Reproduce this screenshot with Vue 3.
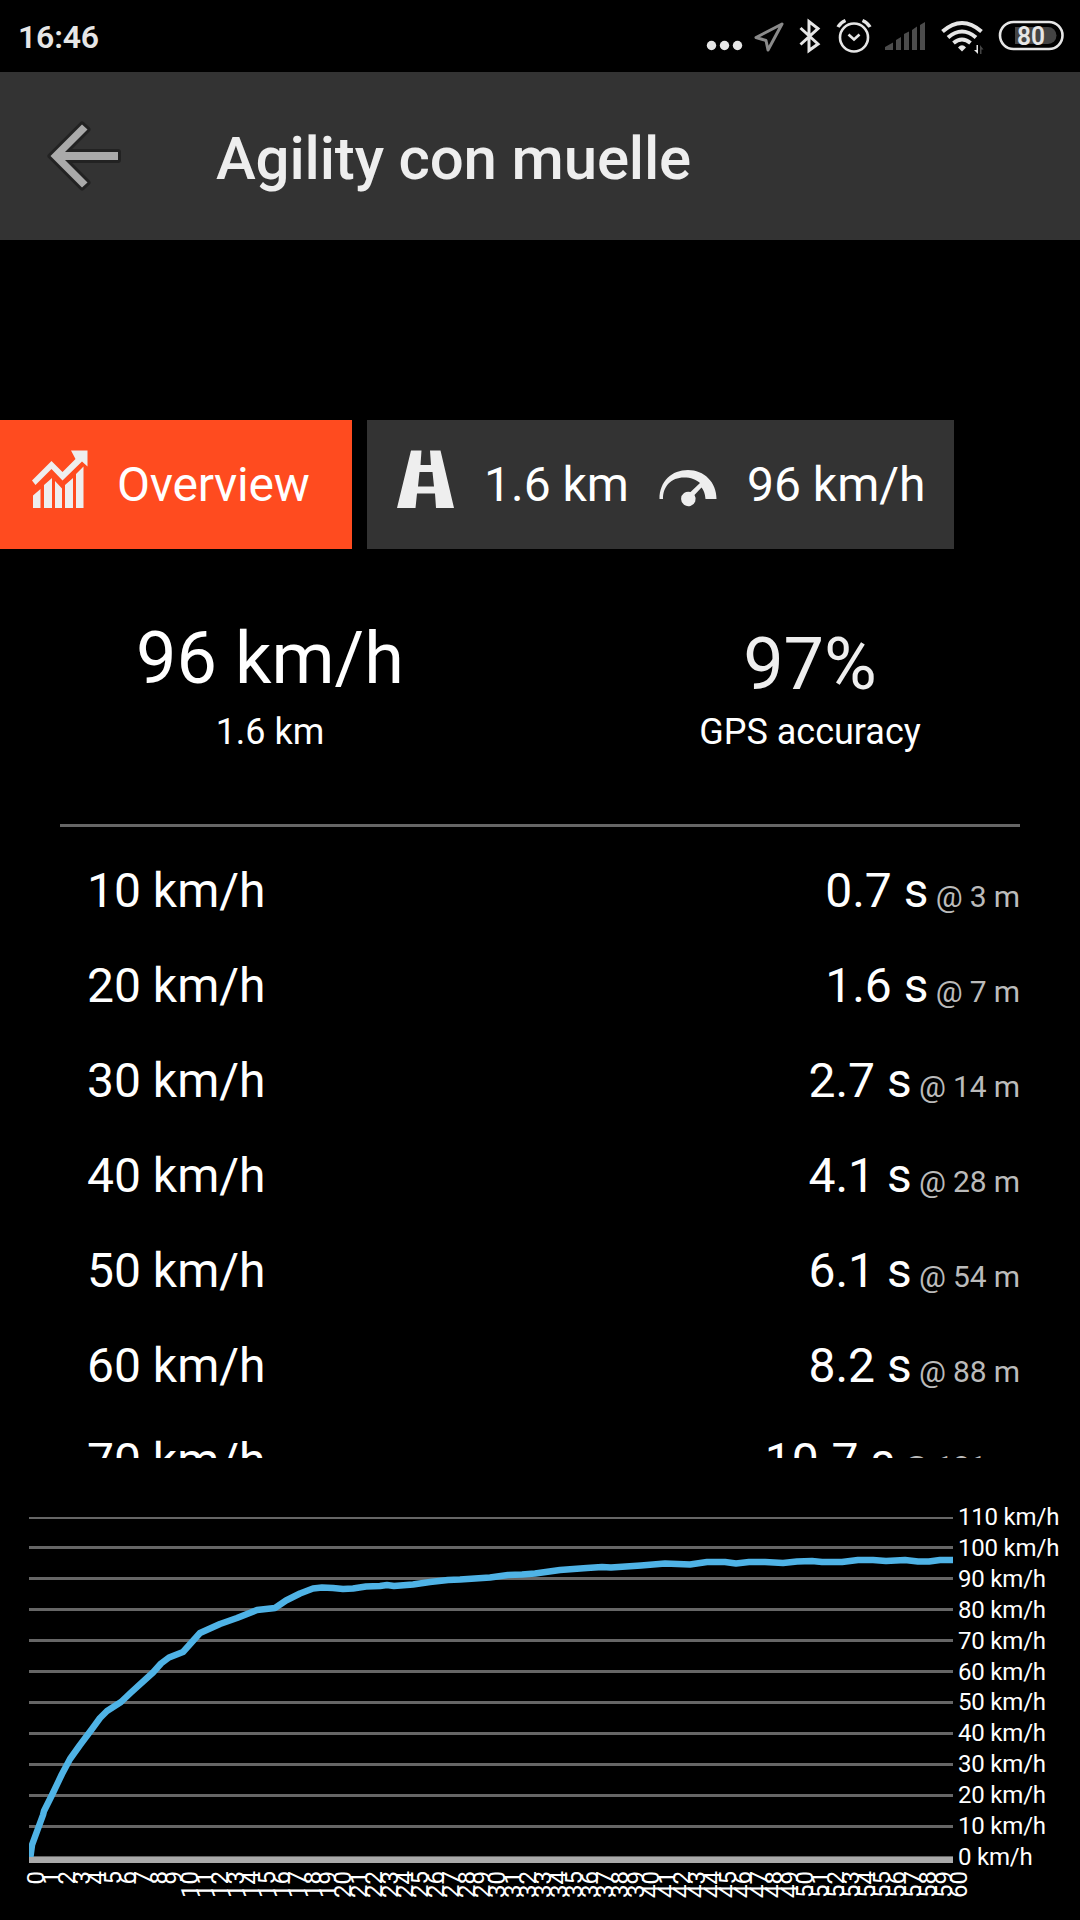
<style>
body {
  background: #000;
}
</style>

<style scoped>
.screen {
  width: 1080px;
  height: 1920px;
  overflow: hidden;
  display: flex;
  flex-direction: column;
  background: #000;
  color: #fff;
  font-family: Roboto, sans-serif;
}

/* Status bar */
.status {
  height: 72px;
  flex: none;
  display: flex;
  align-items: center;
  justify-content: space-between;
  color: #e6e6e6;
}

.clock {
  padding: 2px 0 0 18px;
  font-size: 32px;
  font-weight: 600;
  letter-spacing: -0.2px;
}

.status-icons {
  width: 390px;
  height: 72px;
}

.battery-text {
  font-size: 26px;
  font-weight: 600;
}

/* App bar */
.app-bar {
  height: 168px;
  flex: none;
  display: flex;
  align-items: center;
  background: #333;
}

.back {
  width: 80px;
  height: 80px;
  margin-left: 44px;
}

.app-bar h1 {
  margin: 0;
  padding: 5px 0 0 92px;
  font-size: 60px;
  font-weight: 500;
  letter-spacing: -0.17px;
  color: #eee;
}

/* Tabs */
.tabs {
  display: flex;
  flex: none;
  gap: 15px;
  height: 129px;
  margin-top: 180px;
}

.tab {
  display: flex;
  align-items: center;
  box-sizing: border-box;
  background: #333;
  font-size: 48px;
  white-space: nowrap;
}

.tab.active {
  width: 352px;
  padding-left: 30px;
  background: #ff4b1f;
  letter-spacing: -0.25px;
}

.tab.run {
  width: 587px;
  padding-left: 28px;
}

.tab svg {
  width: 60px;
  height: 60px;
  flex: none;
  margin: 0 27px 11px 0;
  fill: #eee;
}

.tab.run svg {
  margin-right: 29px;
}

.tab.run .speed-icon {
  margin-left: 29px;
  margin-bottom: 0;
}

/* Summary */
.summary {
  display: flex;
  flex: none;
  height: 275px;
}

.stat {
  width: 540px;
  padding-top: 67px;
  text-align: center;
}

.stat strong {
  display: block;
  font-size: 72px;
  line-height: 86px;
  font-weight: 400;
}

.stat span {
  display: block;
  margin-top: 9px;
  font-size: 36px;
  line-height: 42px;
}

.accuracy {
  padding-top: 73px;
}

.accuracy strong {
  color: #eee;
}

.accuracy span {
  margin-top: 3px;
}

/* Splits */
.splits {
  flex: none;
  height: 634px;
  box-sizing: border-box;
  margin: 0 60px;
  padding: 16px 0 0;
  border-top: 3px solid #666;
  overflow: hidden;
  list-style: none;
}

.splits li {
  display: flex;
  justify-content: space-between;
  height: 95px;
  padding-left: 27px;
  font-size: 48px;
  line-height: 95px;
  white-space: pre;
}

.splits small {
  font-size: 30px;
  letter-spacing: -0.15px;
  color: #bbb;
}

/* Chart */
.chart {
  flex: none;
  width: 1080px;
  height: 462px;
  font-size: 24px;
  fill: #fff;
}

.grid {
  fill: #666;
}

.axis {
  fill: #aaa;
}

.curve {
  fill: none;
  stroke: #4fb3e6;
  stroke-width: 6.5;
  stroke-linejoin: round;
}

.speed-label {
  letter-spacing: -0.2px;
}
</style>

<template>
  <div class="screen">
    <div class="status">
      <span class="clock">16:46</span>
      <svg class="status-icons" viewBox="0 0 390 72" fill="#e6e6e6">
        <circle cx="21.5" cy="45.5" r="4.7" />
        <circle cx="34.5" cy="45.5" r="4.7" />
        <circle cx="47.5" cy="45.5" r="4.7" />
        <!-- Location -->
        <path d="M92 24 L66 37.5 L76 40.5 L78 50 Z" fill="none" stroke="#8a8a8a" stroke-width="3" stroke-linejoin="round" />
        <!-- Bluetooth -->
        <path d="M110.500 28 L128 44 L119 50.500 V21.500 L128 28.500 L110.500 44.500" fill="none" stroke="#e6e6e6" stroke-width="3" />
        <!-- Alarm -->
        <g fill="none" stroke="#e6e6e6">
          <circle cx="164" cy="37.500" r="14" stroke-width="2.600" />
          <path d="M158.500 34.500 L164 39.500 L169.500 34.500" stroke-width="2.600" />
          <path d="M148 27 Q150.500 22.500 155.500 20.500 M180 27 Q177.500 22.500 172.500 20.500" stroke-width="3.500" />
        </g>
        <!-- Mobile signal -->
        <path d="M195 50 V47 L203 42.500 V50 Z M206 50 V40 L211 37 V50 Z M214 50 V34 L219 31.500 V50 Z M222 50 V30 L227 26.500 V50 Z M230 50 V25 L235 22 V50 Z" fill="#4c4c4c" />
        <!-- Wifi -->
        <g fill="none" stroke="#e6e6e6" stroke-width="4">
          <path d="M252.500 31.500 Q272 14.500 291.500 31.500" />
          <path d="M258 37.500 Q272 25.500 286 37.500" />
          <path d="M263.500 43 Q272 36 280.500 43" />
        </g>
        <path d="M268 47.500 Q272 43 276 47.500 L272 51.500 Z" />
        <path d="M288 45 V54 L284 50 H286.500 V45 Z" />
        <path d="M290 45 L293.500 49.500 H291.500 V54 H290 Z" fill="#444" />
        <!-- Battery -->
        <rect x="310" y="22" width="62.500" height="27" rx="13.500" fill="none" stroke="#e6e6e6" stroke-width="2.600" />
        <path d="M325 27 H358 A8.500 8.500 0 0 1 358 44 H325 Z" fill="#444" />
        <text class="battery-text" x="341" y="44.500" text-anchor="middle" textLength="28" lengthAdjust="spacingAndGlyphs">80</text>
      </svg>
    </div>

    <header class="app-bar">
      <svg class="back" viewBox="0 0 80 80">
        <path :d="arrow" fill="#222" stroke="#222" stroke-width="6" stroke-linejoin="round" />
        <path :d="arrow" fill="#aaa" />
      </svg>
      <h1>Agility con muelle</h1>
    </header>

    <nav class="tabs">
      <div class="tab active">
        <svg viewBox="0 0 60 60">
          <path d="M2 31.500 L21.500 12 L32.500 23 L45.500 10 L41 1.500 H57.500 V17.500 L52 12.500 L32.500 31.500 L21.500 20 L5.500 36 Z" />
          <path d="M3 59 V46.500 L10.500 40 V59 Z M14 59 V36 L22 29 V59 Z M25 59 V32 L32 39.500 V59 Z M35 59 V36 L43 29 V59 Z M46 59 V25 L53.500 17.500 V59 Z" />
        </svg>
        <span>Overview</span>
      </div>
      <div class="tab run">
        <svg viewBox="0 0 60 60">
          <path d="M16 1.500 H26.500 L25.500 16 H36 L35 1.500 H45.500 L59 59 H41 L40 44.500 H22 L20.500 59 H2 Z M24.500 23 L23 37.500 H39 L37.500 23 Z" fill-rule="evenodd" />
        </svg>
        <span>1.6 km</span>
        <svg class="speed-icon" viewBox="0 0 60 60">
          <path d="M1.500 44 C1.500 26 14 15 30 15 C46 15 58.500 27 58.500 44 H47.500 C47 38 45.500 35 43.500 32.500 L36.500 40 A7.300 7.300 0 1 1 32.500 37 L42 28 C38 24.500 33 22.500 26 22.500 C13 22.500 5 31.500 5 44 Z" />
        </svg>
        <span>96 km/h</span>
      </div>
    </nav>

    <section class="summary">
      <div class="stat">
        <strong>96 km/h</strong>
        <span>1.6 km</span>
      </div>
      <div class="stat accuracy">
        <strong>97%</strong>
        <span>GPS accuracy</span>
      </div>
    </section>

    <ul class="splits">
      <li v-for="split in splits" :key="split.speed">
        <span>{{ split.speed }} km/h</span>
        <span>{{ split.time }} s<small> @ {{ split.distance }} m</small></span>
      </li>
    </ul>

    <svg class="chart" viewBox="0 1458 1080 462">
      <g v-for="(v, i) in speeds" :key="v">
        <rect class="grid" x="29" :y="i === 0 ? 1517 : 1515 + i * 31" width="924" :height="i === 0 ? 2 : 3" />
        <text class="speed-label" x="958" :y="1525 + i * 30.91">{{ v }} km/h</text>
      </g>
      <rect class="axis" x="29" y="1857" width="924" height="6" />
      <clipPath id="plot">
        <rect x="29" y="1517" width="924" height="340" />
      </clipPath>
      <polyline class="curve" :points="curve" clip-path="url(#plot)" />
      <text
        v-for="t in 61"
        :key="t"
        text-anchor="end"
        :transform="`translate(${28.4 + t * 15.385} 1871) rotate(-90)`"
      >{{ t - 1 }}</text>
    </svg>
  </div>
</template>

<script setup>
const arrow =
  "M6.5 40 L38 8.500 L43.500 13.500 L21 36 H74 V44 H21 L43.500 66.500 L38 71.500 Z";

const splits = [
  { speed: 10, time: "0.7", distance: 3 },
  { speed: 20, time: "1.6", distance: 7 },
  { speed: 30, time: "2.7", distance: 14 },
  { speed: 40, time: "4.1", distance: 28 },
  { speed: 50, time: "6.1", distance: 54 },
  { speed: 60, time: "8.2", distance: 88 },
  { speed: 70, time: "10.7", distance: 131 },
];

// 110 down to 0
const speeds = Array.from({ length: 12 }, (_, i) => 110 - i * 10);

const curve = [
  [30, 1860], [32, 1845], [43, 1815], [44, 1811], [52, 1795], [62, 1774],
  [70, 1759], [80, 1745], [92, 1729], [100, 1718], [107, 1711], [121, 1702],
  [131, 1692.5], [153, 1672.5], [161, 1663.5], [169, 1657.5], [183, 1652],
  [200, 1633], [220, 1624], [237, 1618], [257, 1610], [266, 1609], [275, 1608],
  [286, 1600.5], [300, 1593.5], [313, 1588.5], [322, 1587.5], [333, 1588],
  [343, 1589], [353, 1588.5], [366, 1586.5], [380, 1586], [387, 1585],
  [394, 1586], [413, 1584.5], [430, 1582], [448, 1580], [460, 1579.5],
  [475, 1578.5], [490, 1577.5], [508, 1575], [522, 1574.5], [535, 1573.5],
  [560, 1570], [587, 1568], [602, 1567], [611, 1567.5],
  [641, 1565.5], [665, 1563.5], [690, 1564.5], [707, 1562], [725, 1562],
  [736, 1563.5], [749, 1562], [765, 1562], [783, 1563], [797, 1561.5],
  [812, 1561], [822, 1562], [842, 1562], [858, 1560], [873, 1560], [886, 1561],
  [905, 1560], [918, 1561.5], [929, 1561.5], [940, 1560], [953, 1560],
];
</script>
